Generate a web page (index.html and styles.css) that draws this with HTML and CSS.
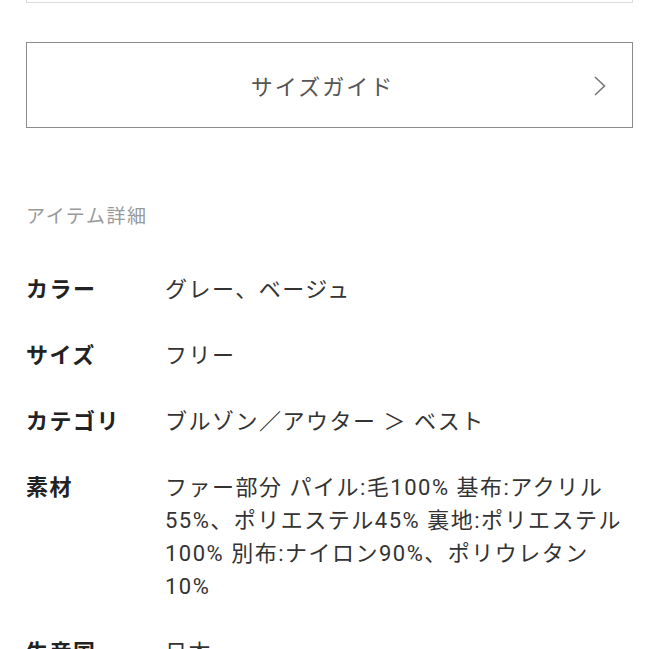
FILE: index.html
```html
<!DOCTYPE html>
<html lang="ja">
<head>
<meta charset="utf-8">
<link rel="stylesheet" href="styles.css">
</head>
<body>
<div class="page">
  <div class="top-box"></div>
  <a class="guide-btn">
    <span class="guide-label">サイズガイド</span>
    <svg class="chevron" width="14" height="22" viewBox="0 0 14 22"><path d="M2 2 L11.5 11 L2 20" fill="none" stroke="#777" stroke-width="1.6"/></svg>
  </a>
  <h2 class="section-title">アイテム詳細</h2>
  <dl class="details">
    <div class="row"><dt>カラー</dt><dd>グレー、ベージュ</dd></div>
    <div class="row"><dt>サイズ</dt><dd>フリー</dd></div>
    <div class="row"><dt>カテゴリ</dt><dd>ブルゾン／アウター ＞ ベスト</dd></div>
    <div class="row"><dt>素材</dt><dd>ファー部分 パイル:毛100% 基布:アクリル55%、ポリエステル45% 裏地:ポリエステル100% 別布:ナイロン90%、ポリウレタン10%</dd></div>
    <div class="row"><dt>生産国</dt><dd>日本</dd></div>
  </dl>
</div>
</body>
</html>
```
FILE: styles.css
```css
html, body {
  margin: 0;
  padding: 0;
  background: #fff;
}
body {
  font-family: Roboto, "Noto Sans CJK JP", sans-serif;
  color: #333;
}
.page {
  padding: 0 16px 0 26px;
  display: flex;
  flex-direction: column;
}
.top-box {
  height: 2px;
  border: 1px solid #dcdcdc;
  border-top: none;
}
.guide-btn {
  margin-top: 39px;
  height: 84px;
  border: 1px solid #8c8c8c;
  display: flex;
  align-items: center;
  justify-content: center;
  padding-right: 14px;
  position: relative;
}
.guide-label {
  font-size: 22px;
  color: #555;
  letter-spacing: 2px;
}
.chevron {
  position: absolute;
  right: 25px;
  top: 32px;
}
.section-title {
  margin: 72px 0 0;
  font-size: 19px;
  font-weight: normal;
  line-height: 33px;
  color: #999;
  letter-spacing: 1.6px;
}
.details {
  margin: 40px 0 0;
  display: flex;
  flex-direction: column;
  gap: 33px;
}
.row {
  display: flex;
  font-size: 22px;
  line-height: 33px;
  letter-spacing: 1.5px;
}
.row dt {
  width: 139px;
  flex: none;
  font-weight: bold;
  color: #222;
}
.row dd {
  margin: 0;
  color: #333;
  flex: 1;
  padding-right: 4px;
}
```
